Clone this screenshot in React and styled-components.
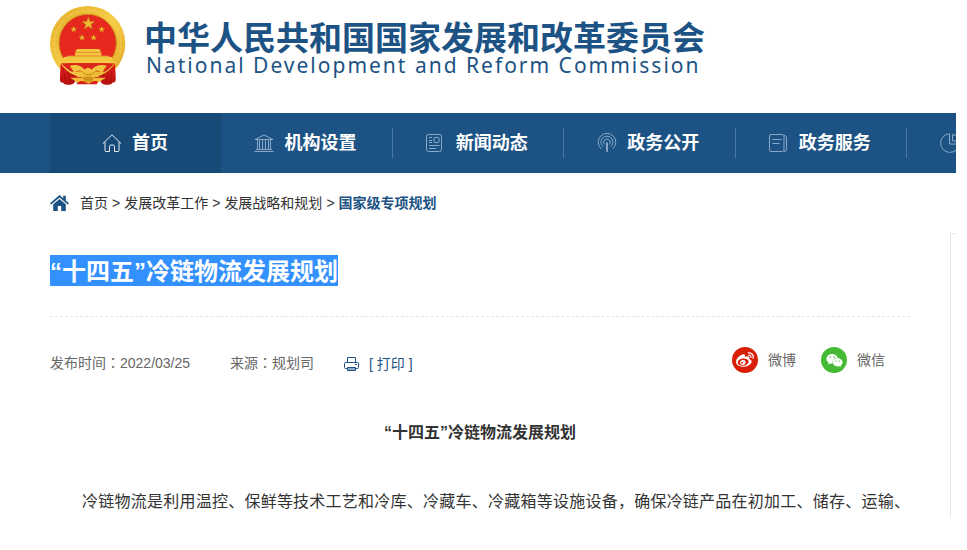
import React from 'react';
import styled, { createGlobalStyle, css } from 'styled-components';
import { FaWeibo, FaWeixin } from 'react-icons/fa';

const Primary = '#1c5384';
const PrimaryDark = '#174a76';
const Line = '#e6e6ea';
const SansFont = '"Liberation Sans", "Noto Sans CJK SC", sans-serif';

const GlobalStyle = createGlobalStyle`
  * {
    box-sizing: border-box;
  }
  body {
    margin: 0;
    background-color: #fff;
    font-family: ${SansFont};
    font-size: 14px;
    color: #333;
  }
  a {
    color: inherit;
    text-decoration: none;
  }
`;

const STAR = 'M0-10 2.4-3.1 9.5-3.1 3.8 1.2 5.9 8.1 0 4-5.9 8.1-3.8 1.2-9.5-3.1-2.4-3.1Z';

const stars = [
  { x: 145, y: 71, scale: 2 },
  { x: 101, y: 88, scale: 1 },
  { x: 185, y: 88, scale: 1 },
  { x: 126, y: 113, scale: 1 },
  { x: 161, y: 113, scale: 1 },
];

const Emblem = () => (
  <svg width="76" height="81" viewBox="30 18 228 243" role="img" aria-label="国徽">
    <defs>
      <linearGradient id="gold" x1="0" y1="0" x2="1" y2="1">
        <stop offset="0" stopColor="#e3ad28" />
        <stop offset="0.5" stopColor="#f5cb45" />
        <stop offset="1" stopColor="#dfa524" />
      </linearGradient>
      <linearGradient id="drape" x1="0" y1="0" x2="0" y2="1">
        <stop offset="0" stopColor="#e2231a" />
        <stop offset="1" stopColor="#b80f0f" />
      </linearGradient>
    </defs>
    <circle cx="143" cy="131" r="113" fill="url(#gold)" />
    <circle cx="143" cy="131" r="100" fill="none" stroke="#f8dc6c" strokeWidth="6" strokeDasharray="14 4" opacity="0.3" />
    <circle cx="143" cy="129" r="86" fill="#e6281e" stroke="#c98b17" strokeWidth="3" />
    {stars.map(({ x, y, scale }) => (
      <path key={`${x}-${y}`} d={STAR} fill="#f3bd35" stroke="#c77b12" strokeWidth="1" transform={`translate(${x} ${y}) scale(${scale})`} />
    ))}
    <g fill="#f6c842">
      <path d="M111 147h67l5 9h-77z" />
      <path d="M105 157h79v10h-79z" />
      <path d="M82 167h124l4 9H78z" />
      <path d="M72 171h144l6 19H64z" />
    </g>
    <path d="M106 157h77M80 170h128" stroke="#d59b22" strokeWidth="2" />
    <path d="M64 190h158c-9 14-19 20-27 25H95c-12-6-22-14-31-25z" fill="#d9251b" />
    <path d="M62 190c12 18 28 32 50 39l-9 19c-6 8-31 8-33 0-12 1-10-8-10-20z" fill="url(#drape)" />
    <path d="M225 190c-12 18-28 32-50 39l9 19c6 8 31 8 33 0 12 0 10-8 10-20z" fill="url(#drape)" />
    <path d="M70 205l6 40M84 214l3 38M97 222v28M217 205l-6 40M203 214l-3 38M190 222v28" stroke="#a01010" strokeWidth="2" fill="none" />
    <path d="M103 231h81l-14 22H112z" fill="#d51f18" />
    <path d="M89 197c18-6 37 0 44 12 6-7 16-7 22 0 8-12 27-18 45-12l-14 21c-11-8-20-4-30 7-8-6-16-6-24 0-11-11-20-15-29-7z" fill="#f4c441" />
    <path d="M91 233h34c4-17 34-17 39 0h34l-22 14c-9-8-18-4-31 4-14-8-22-12-32-3z" fill="#f1bc35" />
    <path d="M128 235c5-8 27-8 33 0l-6 10h-20z" fill="#d2911d" />
    <path d="M116 211c12 2 17 13 29 13s17-11 29-13" stroke="#c98b17" strokeWidth="3" fill="none" />
  </svg>
);

const paths = {
  home: (
    <>
      <path d="M.8 10.6 10 1.8l9.2 8.8" />
      <path d="M3 9v8.500q0 1 1 1h3.500v-5q0-1.500 1.500-1.500h2q1.500 0 1.500 1.500v5H16q1 0 1-1V9" />
    </>
  ),
  bank: (
    <>
      <path d="M1 6.500 10 2l9 4.500z" />
      <path d="M3.500 7v10M8.500 7v10M11.500 7v10M16.500 7v10M5.500 7v10M14.500 7v10M2 16.500h16M.5 18.500h19" />
    </>
  ),
  news: (
    <>
      <rect x=".5" y="1.500" width="15" height="17" rx="2" />
      <rect x="8" y="4.500" width="5" height="5" rx="1" />
      <path d="M3 4.500h3M3 7.500h3M3 9.500h3M3 12.500h10.500M3 15.500h7" />
    </>
  ),
  signal: (
    <>
      <path d="M4.500 16a8.800 8.800 0 1 1 11 0M6 13.600a6 6 0 1 1 8 0M7.500 11.500a3.300 3.300 0 1 1 5 0" />
      <path d="M9.500 10v8.500h1V10a.5.5 0 1 0-1 0z" />
    </>
  ),
  book: (
    <>
      <rect x=".5" y="1.500" width="14.500" height="17" rx="1.500" />
      <path d="M15 2.500q2.500 0 2.500 2v12q0 2-2.500 2M3.500 6.500h9M3.500 10.500h7" />
    </>
  ),
  chart: (
    <>
      <path d="M9.500.8a9.300 9.300 0 1 0 9.700 10.200H9.500z" />
      <path d="M12.500 1.500v6.500h6.500a7.500 7.500 0 0 0-6.500-6.500z" />
    </>
  ),
};

const NavIcon = ({ name }) => (
  <svg width="20" height="20" viewBox="0 0 20 20" fill="none" stroke="currentColor" strokeWidth="1" strokeLinejoin="round" aria-hidden="true">
    {paths[name]}
  </svg>
);

const HouseIcon = () => (
  <svg width="20" height="16" viewBox="0 0 20 16" fill={Primary} aria-hidden="true">
    <path d="M9.500 0 0 8.200 1.200 9.600 9.500 2.500 17.800 9.600 19 8.200 15.800 5.400V.8h-2.600v2.400z" />
    <path d="M9.500 3.900 3.200 9.300V16h4.600v-5h3.400v5h4.600V9.300z" />
  </svg>
);

const PrinterIcon = () => (
  <svg width="15" height="15" viewBox="0 0 15 15" fill="none" stroke={Primary} aria-hidden="true">
    <path d="M3.500 5.500v-5h8v5M3.500 11.500h-2q-1 0-1-1v-4q0-1 1-1h12q1 0 1 1v4q0 1-1 1h-2" />
    <path d="M3.500 10.500h8v3h-8z" fill="#8fabc6" />
    <path d="M11 7.500h2" />
  </svg>
);

const navItems = [
  { icon: 'home', label: '首页', active: true },
  { icon: 'bank', label: '机构设置' },
  { icon: 'news', label: '新闻动态' },
  { icon: 'signal', label: '政务公开' },
  { icon: 'book', label: '政务服务' },
  { icon: 'chart' },
];

const crumbs = ['首页', '发展改革工作', '发展战略和规划'];

const App = () => (
  <Page>
    <GlobalStyle />
    <Header>
      <Emblem />
      <Brand>
        <BrandName>中华人民共和国国家发展和改革委员会</BrandName>
        <BrandSub>National Development and Reform Commission</BrandSub>
      </Brand>
    </Header>

    <NavBar>
      <NavList>
        {navItems.map(({ icon, label, active }) => (
          <NavItem key={icon} $active={active}>
            <NavLink href="#" $active={active}>
              <NavIcon name={icon} />
              {label && <NavLabel>{label}</NavLabel>}
            </NavLink>
          </NavItem>
        ))}
      </NavList>
    </NavBar>

    <Breadcrumb>
      <HouseIcon />
      <Trail>
        {crumbs.map((name) => (
          <React.Fragment key={name}>
            <a href="#">{name}</a>
            <Arrow>&gt;</Arrow>
          </React.Fragment>
        ))}
        <Current href="#">国家级专项规划</Current>
      </Trail>
    </Breadcrumb>

    <Columns>
      <main>
        <TitleBar>
          <Title>
            <Selected>“十四五”冷链物流发展规划</Selected>
          </Title>
        </TitleBar>
        <Meta>
          <MetaText>
            发布时间<Colon>：</Colon>2022/03/25
          </MetaText>
          <MetaText>
            来源<Colon>：</Colon>规划司
          </MetaText>
          <PrintButton type="button">
            <PrinterIcon />
            <span>[ 打印 ]</span>
          </PrintButton>
          <Share>
            <ShareLink href="#">
              <ShareBadge $color="#d81e06">
                <FaWeibo size={18} />
              </ShareBadge>
              微博
            </ShareLink>
            <ShareLink href="#">
              <ShareBadge $color="#45bb35">
                <FaWeixin size={17} />
              </ShareBadge>
              微信
            </ShareLink>
          </Share>
        </Meta>
        <ArticleTitle>“十四五”冷链物流发展规划</ArticleTitle>
        <Paragraph>
          冷链物流是利用温控、保鲜等技术工艺和冷库、冷藏车、冷藏箱等设施设备，确保冷链产品在初加工、储存、运输、流通加工、销售、配送等全过程始终处于规定温度环境下的专门物流。推动冷链物流高质量发展，是减少农产品产后损失
        </Paragraph>
      </main>
      <Sidebar />
    </Columns>
  </Page>
);

const Page = styled.div`
  height: calc(100vh - 33px);
  margin-right: 11px;
  overflow: hidden;
`;
const Header = styled.header`
  display: flex;
  align-items: flex-start;
  height: 113px;
  padding: 6px 50px 0;
`;
const Brand = styled.div`
  padding: 16px 0 0 18px;
  color: ${Primary};
  white-space: nowrap;
`;
const BrandName = styled.div`
  font-weight: bold;
  font-size: 33px;
  line-height: 33px;
`;
const BrandSub = styled.div`
  padding-left: 2px;
  font-family: 'Noto Sans', sans-serif;
  font-size: 21px;
  line-height: 20px;
  letter-spacing: 2px;
`;

const NavBar = styled.nav`
  padding-left: 50px;
  background-color: ${Primary};
`;
const NavList = styled.ul`
  display: grid;
  grid-template-columns: repeat(7, 1fr);
  width: 1200px;
  margin: 0;
  padding: 0;
  list-style: none;
`;
const NavItem = styled.li`
  display: flex;
  align-items: center;
  height: 60px;
  ${({ $active }) =>
    $active &&
    css`
      background-color: ${PrimaryDark};
    `}
`;
const NavLink = styled.a`
  flex: 1;
  display: flex;
  align-items: center;
  gap: 10px;
  height: 30px;
  padding-left: ${({ $active }) => ($active ? 52 : 33)}px;
  border-right: 1px solid ${({ $active }) => ($active ? 'transparent' : '#4b76a0')};
  color: ${({ $active }) => ($active ? '#e8eef4' : '#8ba9c6')};
`;
const NavLabel = styled.span`
  font-weight: bold;
  font-size: 18px;
  line-height: 30px;
  color: #fff;
`;

const Breadcrumb = styled.div`
  display: flex;
  align-items: center;
  gap: 10px;
  height: 60px;
  padding-left: 50px;
`;
const Trail = styled.div`
  display: flex;
  line-height: 24px;
`;
const Arrow = styled.span`
  margin: 0 4px;
`;
const Current = styled.a`
  font-weight: bold;
  color: ${Primary};
`;

const Columns = styled.div`
  display: grid;
  grid-template-columns: 860px 300px;
  gap: 40px;
  min-height: 100vh;
  padding-left: 50px;
`;
const Sidebar = styled.aside`
  border: 1px solid ${Line};
`;
const TitleBar = styled.div`
  padding: 22px 0 30px;
  border-bottom: 1px dashed ${Line};
`;
const Title = styled.h1`
  display: flex;
  margin: 0;
  font-size: 24px;
  line-height: 28px;
`;
const Selected = styled.span`
  padding-top: 3px;
  background-color: #3390ff;
  color: #fff;
`;
const Meta = styled.div`
  display: flex;
  align-items: flex-start;
  padding-top: 30px;
  line-height: 30px;
  color: #666;
`;
const MetaText = styled.span`
  margin-right: 40px;
`;
const Colon = styled.span`
  font-family: 'Noto Sans CJK TC', sans-serif;
`;
const PrintButton = styled.button`
  display: flex;
  align-items: center;
  gap: 10px;
  height: 34px;
  margin-left: -10px;
  padding: 0;
  border: 0;
  background: none;
  font: inherit;
  color: ${Primary};
  cursor: pointer;
`;
const Share = styled.div`
  display: flex;
  gap: 25px;
  margin-left: auto;
  padding-right: 25px;
`;
const ShareLink = styled.a`
  display: flex;
  align-items: center;
  gap: 10px;
  line-height: 26px;
`;
const ShareBadge = styled.span`
  display: flex;
  justify-content: center;
  align-items: center;
  width: 26px;
  height: 26px;
  border-radius: 50%;
  background-color: ${({ $color }) => $color};
  color: #fff;
`;
const ArticleTitle = styled.h2`
  margin: 40px 0 44px;
  font-size: 16px;
  line-height: 24px;
  text-align: center;
`;
const Paragraph = styled.p`
  margin: 0;
  font-size: 16px;
  line-height: 25px;
  text-align: justify;
  text-align-last: justify;
  text-indent: 2em;
`;

export default App;
